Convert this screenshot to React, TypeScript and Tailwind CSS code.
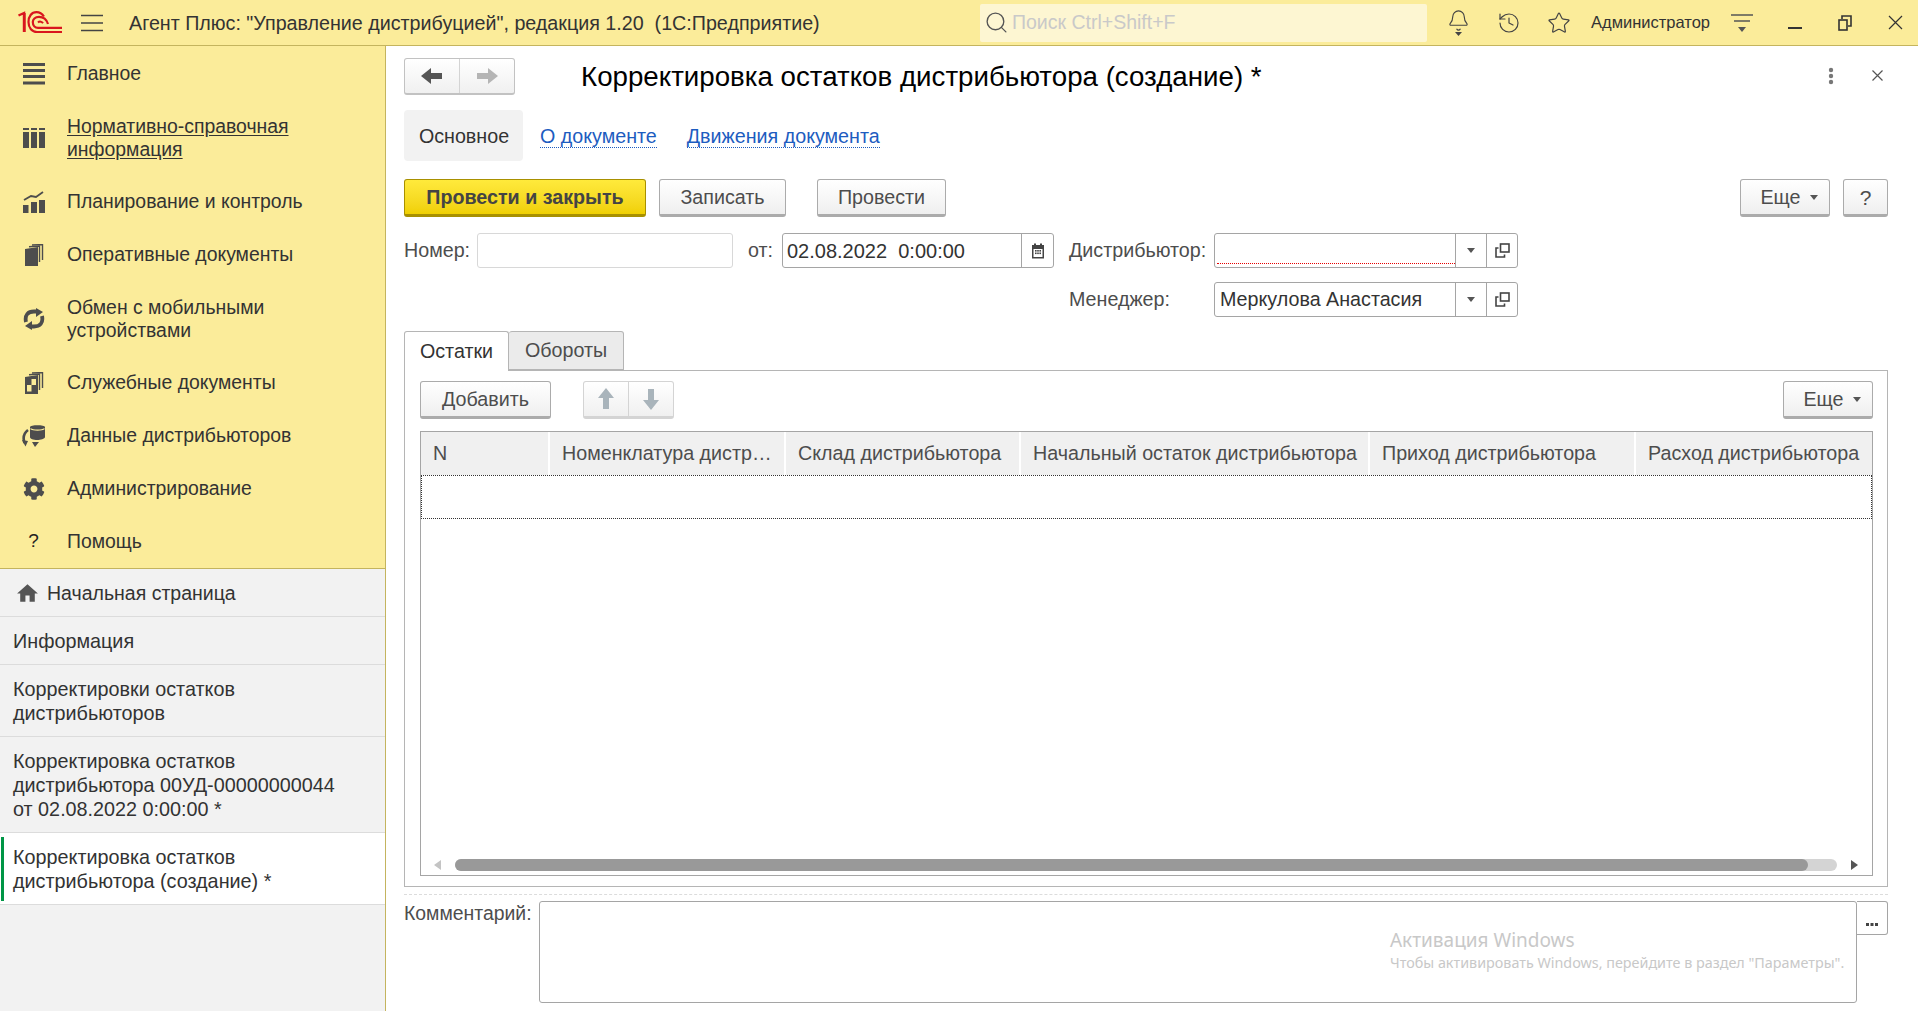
import { Bell, History, Star, Search } from "lucide-react";
import { FaCog } from "react-icons/fa";
import { MdHome } from "react-icons/md";

const gray = "#4d4d4d";

function Logo() {
  return (
    <svg width="44" height="23" viewBox="0 0 44 23" fill="none" stroke="#d9161e">
      <path d="M0.5 4.5 L6 2 V21" strokeWidth="2.4" />
      <path d="M6.5 2 V21" strokeWidth="2.4" />
      <path d="M26 5.5 C24 2.5 21 1.2 18.5 1.2 C13.5 1.2 10.5 5.500 10.5 11 C10.5 17 14 21 19 21 H44" strokeWidth="2.2" />
      <path d="M30 13 C28.5 8 25 5.800 21 5.800 C17 5.800 14.800 8.500 14.800 11 C14.800 14.500 17 16.800 20 16.800 H44" strokeWidth="2.2" />
      <path d="M20 11.500 C21.500 10 24 10.500 25 12.200" strokeWidth="2" />
    </svg>
  );
}

function Hamburger() {
  return (
    <svg width="22" height="18" viewBox="0 0 22 18" stroke="#444" strokeWidth="1.3">
      <path d="M0 1.5H22M0 9H22M0 16.5H22" />
    </svg>
  );
}

function SectionIcon({ name }: { name: string }) {
  if (name === "main")
    return (
      <svg width="22" height="22" viewBox="0 0 22 22" fill={gray}>
        <rect y="0" width="22" height="3" />
        <rect y="6" width="22" height="3" />
        <rect y="12" width="22" height="3" />
        <rect y="18.5" width="22" height="3" />
      </svg>
    );
  if (name === "nsi")
    return (
      <svg width="22" height="22" viewBox="0 0 22 22" fill={gray}>
        <rect y="1" width="6" height="2" />
        <rect x="8" y="1" width="6" height="2" />
        <rect x="16" y="1" width="6" height="2" />
        <rect y="5" width="6" height="16" />
        <rect x="8" y="5" width="6" height="16" />
        <rect x="16" y="5" width="6" height="16" />
      </svg>
    );
  if (name === "plan")
    return (
      <svg width="22" height="22" viewBox="0 0 22 22" fill={gray}>
        <rect y="14" width="5.5" height="8" />
        <rect x="8" y="11" width="6" height="11" />
        <rect x="16" y="9" width="6" height="13" />
        <path d="M1 9 L8 5 L13 6 L20 1" fill="none" stroke={gray} strokeWidth="1.8" />
      </svg>
    );
  if (name === "docs")
    return (
      <svg width="22" height="22" viewBox="0 0 22 22" fill={gray}>
        <path d="M2 5 L15 3 V22 H2 Z" />
        <path d="M16.5 18 V2 L6 2.8" fill="none" stroke={gray} strokeWidth="1.4" />
        <path d="M19.5 16 V0.5 L9 1" fill="none" stroke={gray} strokeWidth="1.4" />
      </svg>
    );
  if (name === "sync")
    return (
      <svg width="22" height="22" viewBox="0 0 22 22" fill="none" stroke={gray} strokeWidth="3.8">
        <path d="M3 14 C1.5 7 5 3.5 11 3.5 H14" />
        <path d="M13 0 L20 4 L13 9 Z" fill={gray} stroke="none" />
        <path d="M19 8 C20.5 15 17 18.5 11 18.5 H8" />
        <path d="M9 13 L2 18 L9 22 Z" fill={gray} stroke="none" />
      </svg>
    );
  if (name === "service")
    return (
      <svg width="22" height="22" viewBox="0 0 22 22" fill={gray}>
        <path d="M2 5 L15 3 V22 H2 Z" />
        <rect x="8.5" y="7" width="4.5" height="6" fill="#fbec9a" />
        <rect x="4" y="13" width="4.5" height="6.5" fill="#fbec9a" />
        <path d="M16.5 18 V2 L6 2.8" fill="none" stroke={gray} strokeWidth="1.4" />
        <path d="M19.5 16 V0.5 L9 1" fill="none" stroke={gray} strokeWidth="1.4" />
      </svg>
    );
  if (name === "data")
    return (
      <svg width="24" height="22" viewBox="0 0 24 22" fill={gray}>
        <path d="M8 2 C8 -0.5 23 -0.5 23 2 V12 C23 14 18 15 15.5 15 C11 15 8 14 8 12 Z" />
        <path d="M8.5 3.6 C11 5.6 20 5.6 22.5 3.6" fill="none" stroke="#fbec9a" strokeWidth="1.2" />
        <path d="M6 5 C2 8 0.5 12 2.5 18" fill="none" stroke={gray} strokeWidth="2.6" />
        <path d="M0 15 L6 16 L3.5 21.5 Z" />
        <path d="M10 17 H17 L13 22 Z" />
      </svg>
    );
  if (name === "admin") return <FaCog size={22} color={gray} />;
  return <span className="text-[19px] text-[#222]">?</span>;
}

const sections = [
  { icon: "main", title: ["Главное"] },
  { icon: "nsi", title: ["Нормативно-справочная", "информация"], active: true },
  { icon: "plan", title: ["Планирование и контроль"] },
  { icon: "docs", title: ["Оперативные документы"] },
  { icon: "sync", title: ["Обмен с мобильными", "устройствами"] },
  { icon: "service", title: ["Служебные документы"] },
  { icon: "data", title: ["Данные дистрибьюторов"] },
  { icon: "admin", title: ["Администрирование"] },
  { icon: "help", title: ["Помощь"] },
];

function Sidebar() {
  return (
    <aside className="w-[386px] shrink-0 flex flex-col border-r border-[#c4b45e] bg-[#f2f2f2]">
      <nav className="bg-[#fbec9a] border-b border-[#c4b45e] pt-px h-[523px]">
        {sections.map((s) => (
          <div key={s.icon} className={`flex items-center ${s.title.length > 1 ? "h-[75px]" : "h-[53px]"}`}>
            <div className="w-[67px] shrink-0 flex justify-center pl-[1px] pr-[1px]">
              <SectionIcon name={s.icon} />
            </div>
            <div className={`text-[19.4px] leading-[23px] text-[#333] ${s.active ? "underline underline-offset-2" : ""}`}>
              {s.title.map((line) => (
                <div key={line}>{line}</div>
              ))}
            </div>
          </div>
        ))}
      </nav>
      <div className="h-[48px] flex items-center pl-[15px] pt-[2px] gap-[7px] border-b border-[#dcdcdc] text-[19.5px] text-[#333]">
        <MdHome size={25} color="#555" />
        <span>Начальная страница</span>
      </div>
      <div className="h-[48px] flex items-center pl-[13px] pt-[2px] border-b border-[#dcdcdc] text-[19.8px] text-[#333]">
        Информация
      </div>
      <div className="h-[72px] flex items-center pl-[13px] pt-[1px] border-b border-[#dcdcdc] text-[19.8px] leading-[24px] text-[#333]">
        <div>
          Корректировки остатков
          <br />
          дистрибьюторов
        </div>
      </div>
      <div className="h-[96px] flex items-center pl-[13px] pt-[1px] border-b border-[#dcdcdc] text-[19.8px] leading-[24px] text-[#333]">
        <div>
          Корректировка остатков
          <br />
          дистрибьютора 00УД-00000000044
          <br />
          от 02.08.2022 0:00:00 *
        </div>
      </div>
      <div className="h-[72px] flex items-center bg-white border-b border-[#dcdcdc] text-[19.8px] leading-[24px] text-[#333]">
        <div className="ml-[1px] w-[3px] h-[64px] bg-[#009646]" />
        <div className="ml-[9px] pt-[1px]">
          Корректировка остатков
          <br />
          дистрибьютора (создание) *
        </div>
      </div>
    </aside>
  );
}

function TopBar() {
  return (
    <header className="h-[46px] shrink-0 flex items-center bg-[#fbec9a] border-b border-[#c4b45e] text-[#333]">
      <div className="ml-[18px] w-[63px]">
        <Logo />
      </div>
      <Hamburger />
      <div className="ml-[26px] w-[851px] pt-[2px] text-[19.7px] whitespace-nowrap">
        Агент Плюс: "Управление дистрибуцией", редакция 1.20&nbsp; (1С:Предприятие)
      </div>
      <div className="w-[447px] h-[38px] flex items-center bg-[#fdf6d2] rounded-[2px] pl-[4px] gap-[3px]">
        <Search size={25} strokeWidth={1.3} color="#555" />
        <span className="text-[19.5px] pt-[1px] text-[#c9c9c9]">Поиск Ctrl+Shift+F</span>
      </div>
      <div className="ml-[17px] w-[28px] flex flex-col items-center">
        <Bell size={23} strokeWidth={1.2} color="#444" />
        <svg width="7" height="4" viewBox="0 0 7 4" fill="#444">
          <path d="M0 0H7L3.500 4Z" />
        </svg>
      </div>
      <div className="ml-[23px] w-[28px] flex justify-center">
        <History size={24} strokeWidth={1.2} color="#444" />
      </div>
      <div className="ml-[22px] w-[28px] flex justify-center">
        <Star size={24} strokeWidth={1.2} color="#444" />
      </div>
      <div className="ml-[18px] text-[16.5px] text-[#333] whitespace-nowrap">Администратор</div>
      <div className="ml-[21px]">
        <svg width="22" height="22" viewBox="0 0 22 22" fill="none" stroke="#555" strokeWidth="1.3">
          <path d="M0 3H22M3 9H19" />
          <path d="M7 15H15L11 20Z" fill="#555" stroke="none" />
        </svg>
      </div>
      <div className="ml-[35px]">
        <svg width="14" height="14" viewBox="0 0 14 14" fill="#333">
          <rect y="11" width="14" height="2" />
        </svg>
      </div>
      <div className="ml-[36px]">
        <svg width="14" height="16" viewBox="0 0 14 16" fill="none" stroke="#333" strokeWidth="1.6">
          <rect x="1" y="5" width="8" height="10" />
          <path d="M4 4V1H13V11H10" />
        </svg>
      </div>
      <div className="ml-[36px]">
        <svg width="15" height="15" viewBox="0 0 15 15" fill="none" stroke="#333" strokeWidth="1.2">
          <path d="M1 1L14 14M14 1L1 14" />
        </svg>
      </div>
    </header>
  );
}

function Btn({ label, className = "" }: { label: string; className?: string }) {
  return (
    <button className={`h-[38px] flex items-center justify-center pt-[1px] rounded-[3px] border border-[#ababab] border-b-[3px] bg-linear-to-b from-white to-[#efefef] text-[19.7px] text-[#4d4d4d] ${className}`}>
      {label}
    </button>
  );
}

function MoreBtn({ className = "" }: { className?: string }) {
  return (
    <button className={`h-[38px] flex items-center justify-center gap-[9px] pl-[8px] pt-[1px] rounded-[3px] border border-[#ababab] border-b-[3px] bg-linear-to-b from-white to-[#efefef] text-[19.7px] text-[#4d4d4d] ${className}`}>
      Еще
      <Caret />
    </button>
  );
}

function Caret() {
  return (
    <svg width="8" height="5" viewBox="0 0 8 5" fill="#555">
      <path d="M0 0H8L4 5Z" />
    </svg>
  );
}

function OpenIcon() {
  return (
    <svg width="15" height="15" viewBox="0 0 15 15" fill="none" stroke="#444" strokeWidth="1.6">
      <rect x="5.5" y="1" width="8.5" height="8" />
      <path d="M3.5 5H1V14H9.5V11.5" />
    </svg>
  );
}

function ComboField({ value, invalid, className = "" }: { value?: string; invalid?: boolean; className?: string }) {
  return (
    <div className={`h-[35px] flex rounded-[3px] border border-[#a5a5a5] bg-white text-[19.7px] text-[#333] ${className}`}>
      <div className="flex-1 flex items-center pl-[5px] relative">
        {value}
        {invalid && <div className="absolute left-[2px] right-0 bottom-[3px] border-b border-dotted border-[#e60000]" />}
      </div>
      <div className="w-[31px] flex items-center justify-center border-l border-[#a5a5a5]">
        <Caret />
      </div>
      <div className="w-[31px] flex items-center justify-center border-l border-[#a5a5a5]">
        <OpenIcon />
      </div>
    </div>
  );
}

function BlockArrow({ dir, color }: { dir: "left" | "right" | "up" | "down"; color: string }) {
  const rotate = { left: "", right: "rotate-180", up: "rotate-90", down: "-rotate-90" }[dir];
  return (
    <svg width="22" height="18" viewBox="0 0 22 18" fill={color} className={rotate}>
      <path d="M0 9L10 1V6H21V12H10V17Z" />
    </svg>
  );
}

const columns = [
  { title: "N", width: "w-[129px]" },
  { title: "Номенклатура дистр…", width: "w-[236px]" },
  { title: "Склад дистрибьютора", width: "w-[235px]" },
  { title: "Начальный остаток дистрибьютора", width: "w-[349px]" },
  { title: "Приход дистрибьютора", width: "w-[266px]" },
  { title: "Расход дистрибьютора", width: "flex-1" },
];

function Table() {
  return (
    <div className="flex-1 flex flex-col border border-[#a5a5a5] mb-[10px]">
      <div className="flex h-[43px] shrink-0 bg-[#f0f0f0]">
        {columns.map((c) => (
          <div key={c.title} className={`${c.width} min-w-0 flex items-center pl-[12px] border-r-2 border-white last:border-r-0 text-[19.7px] text-[#4d4d4d] whitespace-nowrap`}>
            {c.title}
          </div>
        ))}
      </div>
      <div className="h-[44px] shrink-0 border border-dotted border-[#333]" />
      <div className="mt-auto mb-[4px] h-[12px] flex items-center">
        <svg width="8" height="10" viewBox="0 0 8 10" fill="#c4c4c4" className="ml-[13px]">
          <path d="M7 0V10L0 5Z" />
        </svg>
        <div className="ml-[13px] w-[1382px] h-[12px] rounded-full bg-[#d4d4d4]">
          <div className="w-[1353px] h-[12px] rounded-full bg-[#999]" />
        </div>
        <svg width="8" height="10" viewBox="0 0 8 10" fill="#555" className="ml-[13px]">
          <path d="M1 0V10L8 5Z" />
        </svg>
      </div>
    </div>
  );
}

function Form() {
  return (
    <main className="flex-1 min-w-0 flex flex-col pl-[18px] pr-[30px] bg-white relative">
      <div className="mt-[12px] h-[37px] flex items-center">
        <div className="w-[111px] h-[37px] flex rounded-[3px] border border-[#c2c2c2] border-b-2 bg-linear-to-b from-white to-[#f0f0f0]">
          <div className="w-[55px] flex items-center justify-center border-r border-[#d4d4d4]">
            <BlockArrow dir="left" color="#555" />
          </div>
          <div className="flex-1 flex items-center justify-center">
            <BlockArrow dir="right" color="#b5b5b5" />
          </div>
        </div>
        <h1 className="ml-[66px] text-[27.7px] text-black whitespace-nowrap">
          Корректировка остатков дистрибьютора (создание) *
        </h1>
        <div className="ml-auto flex items-center -mt-[2px]">
          <svg width="6" height="18" viewBox="0 0 6 18" fill="#777">
            <circle cx="3" cy="3" r="2.2" />
            <circle cx="3" cy="9" r="2.2" />
            <circle cx="3" cy="15" r="2.2" />
          </svg>
          <svg width="11" height="11" viewBox="0 0 11 11" stroke="#555" strokeWidth="1.2" className="ml-[38px] mr-[5px]">
            <path d="M0.5 0.5L10.5 10.5M10.5 0.5L0.5 10.5" />
          </svg>
        </div>
      </div>

      <div className="mt-[15px] h-[51px] flex items-center text-[19.7px]">
        <div className="w-[119px] h-[51px] flex items-center justify-center pt-[2px] pl-[1px] rounded-[4px] bg-[#f2f2f2] text-[#333]">Основное</div>
        <a className="ml-[17px] mt-[2px] text-[#1d5cc0] border-b border-dotted border-[#1d5cc0] leading-[21px]">О документе</a>
        <a className="ml-[30px] mt-[2px] text-[#1d5cc0] border-b border-dotted border-[#1d5cc0] leading-[21px]">Движения документа</a>
      </div>

      <div className="mt-[18px] flex items-center">
        <button className="w-[242px] h-[38px] pt-[1px] rounded-[3px] border border-[#a89000] border-b-[3px] bg-linear-to-b from-[#ffea3b] to-[#f0d000] text-[19.7px] font-bold text-[#444]">
          Провести и закрыть
        </button>
        <Btn label="Записать" className="ml-[13px] w-[127px]" />
        <Btn label="Провести" className="ml-[31px] w-[129px]" />
        <MoreBtn className="ml-auto w-[90px]" />
        <Btn label="?" className="ml-[13px] w-[45px] text-[21px]" />
      </div>

      <div className="mt-[16px] flex items-center text-[19.7px] text-[#4d4d4d]">
        <span className="w-[73px]">Номер:</span>
        <div className="w-[256px] h-[35px] rounded-[3px] border border-[#d8d8d8] bg-white" />
        <span className="ml-[15px] w-[34px]">от:</span>
        <div className="w-[272px] h-[35px] flex rounded-[3px] border border-[#a5a5a5] text-[#333]">
          <div className="flex-1 flex items-center pl-[4px] text-[20px] whitespace-pre">02.08.2022  0:00:00</div>
          <div className="w-[32px] flex items-center justify-center border-l border-[#a5a5a5]">
            <svg width="14" height="16" viewBox="0 0 14 16" fill="#444">
              <path d="M1 2H3V0.5H5V2H9V0.5H11V2H13V15.5H1ZM2.5 6V14H11.500V6Z" />
              <rect x="4" y="7" width="1.6" height="1.6" />
              <rect x="6.200" y="7" width="1.6" height="1.6" />
              <rect x="8.400" y="7" width="1.6" height="1.6" />
              <rect x="4" y="9.500" width="1.6" height="1.6" />
              <rect x="6.200" y="9.500" width="1.6" height="1.6" />
              <rect x="8.400" y="9.500" width="1.6" height="1.6" />
            </svg>
          </div>
        </div>
        <span className="ml-[15px] w-[145px]">Дистрибьютор:</span>
        <ComboField invalid className="w-[304px]" />
      </div>

      <div className="mt-[14px] flex items-center text-[19.7px] text-[#4d4d4d]">
        <span className="ml-[665px] w-[145px]">Менеджер:</span>
        <ComboField value="Меркулова Анастасия" className="w-[304px]" />
      </div>

      <div className="mt-[14px] h-[40px] flex -mb-px relative text-[19.7px]">
        <div className="w-[105px] h-[40px] flex items-center justify-center rounded-t-[3px] border border-b-0 border-[#b5b5b5] bg-white text-[#333]">Остатки</div>
        <div className="w-[115px] h-[39px] flex items-center justify-center rounded-t-[3px] border border-l-0 border-[#b5b5b5] bg-[#ebebeb] text-[#4d4d4d]">Обороты</div>
      </div>

      <section className="h-[517px] flex flex-col border border-[#b5b5b5] pl-[15px] pr-[14px]">
        <div className="mt-[10px] flex items-center">
          <Btn label="Добавить" className="w-[131px]" />
          <div className="ml-[32px] w-[91px] h-[38px] flex rounded-[3px] border border-[#d4d4d4] border-b-[3px] bg-linear-to-b from-white to-[#f0f0f0]">
            <div className="w-[45px] flex items-center justify-center border-r border-[#d4d4d4]">
              <BlockArrow dir="up" color="#a9b4bb" />
            </div>
            <div className="flex-1 flex items-center justify-center">
              <BlockArrow dir="down" color="#a9b4bb" />
            </div>
          </div>
          <MoreBtn className="ml-auto w-[90px]" />
        </div>
        <div className="mt-[12px] flex-1 flex flex-col min-h-0">
          <Table />
        </div>
      </section>

      <div className="mt-[7px] border-t border-dashed border-[#dcdcdc]" />

      <div className="mt-[6px] flex items-start text-[19.4px] leading-[24px] text-[#4d4d4d]">
        <span className="w-[135px]">Комментарий:</span>
        <div className="w-[1318px] h-[102px] rounded-[3px] border border-[#a5a5a5] bg-white" />
        <div className="w-[31px] h-[34px] flex items-end justify-center pb-[8px] rounded-r-[3px] border border-l-0 border-[#a5a5a5]">
          <svg width="12" height="3" viewBox="0 0 12 3" fill="#444">
            <rect width="3" height="3" />
            <rect x="4.500" width="3" height="3" />
            <rect x="9" width="3" height="3" />
          </svg>
        </div>
      </div>

      <div className="absolute left-[1004px] top-[881px] font-['Noto_Sans',sans-serif] text-[#c8c8c8] whitespace-nowrap">
        <div className="text-[19px] leading-[26px]">Активация Windows</div>
        <div className="text-[14.35px] leading-[20px]">Чтобы активировать Windows, перейдите в раздел "Параметры".</div>
      </div>
    </main>
  );
}

export default function App() {
  return (
    <div className="w-[1918px] h-[1011px] flex flex-col overflow-hidden bg-white font-['Liberation_Sans',Arial,sans-serif]">
      <TopBar />
      <div className="flex-1 min-h-0 flex">
        <Sidebar />
        <Form />
      </div>
    </div>
  );
}
